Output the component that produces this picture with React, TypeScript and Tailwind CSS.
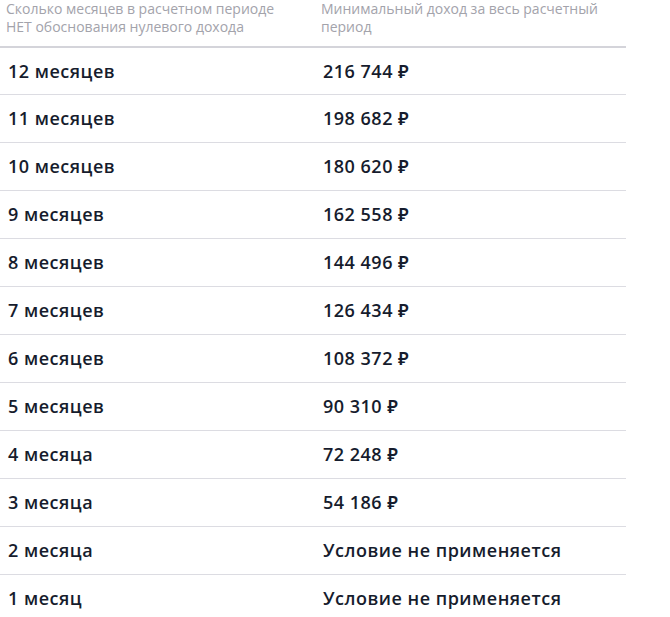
import React from "react";

const rows: [string, string][] = [
  ["12 месяцев", "216 744 ₽"],
  ["11 месяцев", "198 682 ₽"],
  ["10 месяцев", "180 620 ₽"],
  ["9 месяцев", "162 558 ₽"],
  ["8 месяцев", "144 496 ₽"],
  ["7 месяцев", "126 434 ₽"],
  ["6 месяцев", "108 372 ₽"],
  ["5 месяцев", "90 310 ₽"],
  ["4 месяца", "72 248 ₽"],
  ["3 месяца", "54 186 ₽"],
  ["2 месяца", "Условие не применяется"],
  ["1 месяц", "Условие не применяется"],
];

export default function App() {
  return (
    <div
      className="w-[670px] h-[617px] overflow-hidden bg-white"
      style={{ fontFamily: "'Open Sans', 'Noto Sans', sans-serif" }}
    >
      <div className="w-[626px]">
        <div className="grid grid-cols-[315px_311px] h-[48px] border-b-2 border-[#d4d4da] text-[14px] leading-[18px] font-medium text-[#a3a3ab]">
          <div className="pl-[6px] whitespace-nowrap">
            Сколько месяцев в расчетном периоде
            <br />
            НЕТ обоснования нулевого дохода
          </div>
          <div className="pl-[6px] whitespace-nowrap">
            Минимальный доход за весь расчетный
            <br />
            период
          </div>
        </div>
        {rows.map(([a, b], i) => (
          <div
            key={i}
            className={`grid grid-cols-[315px_311px] items-center border-b border-[#dcdce2] text-[18px] font-semibold text-[#161c2d] tracking-[0.5px] ${
              i === 0 ? "h-[47px]" : "h-[48px]"
            }`}
          >
            <div className="pl-[8px]">{a}</div>
            <div className="pl-[8px]">{b}</div>
          </div>
        ))}
      </div>
    </div>
  );
}
